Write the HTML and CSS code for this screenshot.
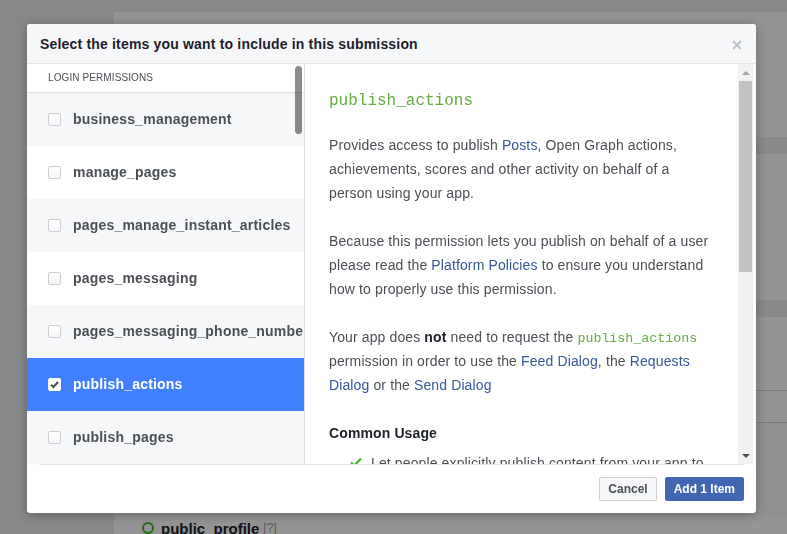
FILE: index.html
```html
<!DOCTYPE html>
<html lang="en">
<head>
<meta charset="utf-8">
<title>Select items</title>
<link rel="stylesheet" href="styles.css">
</head>
<body>
<div class="page">
  <div class="card">
    <div class="sec sec-a"></div>
    <div class="band"></div>
    <div class="sec sec-b"></div>
    <div class="band"></div>
    <div class="sec sec-c"></div>
    <div class="sec sec-d"></div>
    <div class="sec sec-e"></div>
    <div class="perm-row"><span class="ring"></span><span class="perm-name">public_profile</span><span class="perm-help">[?]</span></div>
  </div>
</div>
<div class="overlay"></div>
<div class="modal">
  <div class="modal-header">
    <h2 class="modal-title">Select the items you want to include in this submission</h2>
    <span class="close"><svg width="10" height="10" viewBox="0 0 10 10"><path d="M1 1L9 9M9 1L1 9" stroke="#bec2c9" stroke-width="2" fill="none"/></svg></span>
  </div>
  <div class="modal-body">
    <div class="list-pane">
      <div class="list-head">Login Permissions</div>
      <ul class="perm-list">
        <li class="item alt"><span class="cb"></span><span class="item-name">business_management</span></li>
        <li class="item"><span class="cb"></span><span class="item-name">manage_pages</span></li>
        <li class="item alt"><span class="cb"></span><span class="item-name">pages_manage_instant_articles</span></li>
        <li class="item"><span class="cb"></span><span class="item-name">pages_messaging</span></li>
        <li class="item alt"><span class="cb"></span><span class="item-name">pages_messaging_phone_number</span></li>
        <li class="item selected"><span class="cb checked"><svg width="11" height="11" viewBox="0 0 11 11"><path d="M2 5.8L4.4 8L9 3" stroke="#4b4f56" stroke-width="2" fill="none"/></svg></span><span class="item-name">publish_actions</span></li>
        <li class="item alt"><span class="cb"></span><span class="item-name">publish_pages</span></li>
      </ul>
      <div class="overlay-thumb"></div>
    </div>
    <div class="detail-pane">
      <div class="detail-content">
        <h3 class="perm-title">publish_actions</h3>
        <p class="para">Provides access to publish <a class="link">Posts</a>, Open Graph actions, achievements, scores and other activity on behalf of a person using your app.</p>
        <p class="para">Because this permission lets you publish on behalf of a user please read the <a class="link">Platform Policies</a> to ensure you understand how to properly use this permission.</p>
        <p class="para">Your app does <b class="strong">not</b> need to request the <code class="code">publish_actions</code> permission in order to use the <a class="link">Feed Dialog</a>, the <a class="link">Requests Dialog</a> or the <a class="link">Send Dialog</a></p>
        <h4 class="usage-title">Common Usage</h4>
        <ul class="usage-list">
          <li class="usage-item"><svg class="tick" width="12" height="10" viewBox="0 0 12 10"><path d="M1 5.5L4.3 8.5L11 1.5" stroke="#42b72a" stroke-width="2.2" fill="none"/></svg><span>Let people explicitly publish content from your app to Facebook.</span></li>
        </ul>
      </div>
      <div class="vscroll">
        <span class="arr up"></span>
        <span class="vthumb"></span>
        <span class="vfill"></span>
        <span class="arr down"></span>
      </div>
    </div>
  </div>
  <div class="modal-footer">
    <button class="btn">Cancel</button>
    <button class="btn primary">Add 1 Item</button>
  </div>
</div>
</body>
</html>
```

FILE: styles.css
```css
html, body {
  margin: 0;
  padding: 0;
}
body {
  width: 787px;
  height: 534px;
  overflow: hidden;
  background: #e9ebee;
  font-family: "Liberation Sans", Arial, Helvetica, sans-serif;
  color: #4b4f56;
}

/* background page */
.page {
  padding: 12px 0 0 114px;
}
.card {
  background: #fff;
  height: 522px;
}
.sec-a { height: 125px; }
.band { height: 17px; background: #eceef1; }
.sec-b { height: 146px; }
.sec-c { height: 73px; border-bottom: 1px solid #d3d6db; }
.sec-d { height: 31px; border-bottom: 1px solid #d3d6db; }
.sec-e { height: 91px; background: #f8f9fa; }
.perm-row {
  display: flex;
  align-items: center;
  padding-left: 28px;
  height: 28px;
}
.ring {
  width: 8px;
  height: 8px;
  border: 2px solid #42b72a;
  border-radius: 50%;
  margin-right: 7px;
}
.perm-name {
  font-weight: bold;
  font-size: 15px;
  color: #1d2129;
}
.perm-help {
  font-size: 12px;
  color: #9a9a9a;
  margin-left: 4px;
}

.overlay {
  position: fixed;
  inset: 0;
  background: rgba(0, 0, 0, 0.42);
}

/* modal */
.modal {
  position: fixed;
  left: 27px;
  top: 24px;
  width: 729px;
  height: 489px;
  background: #fff;
  border-radius: 3px;
  box-shadow: 0 2px 12px rgba(0, 0, 0, 0.3);
  display: flex;
  flex-direction: column;
  overflow: hidden;
}
.modal-header {
  height: 39px;
  flex: none;
  background: #f6f7f9;
  border-bottom: 1px solid #e5e5e5;
  display: flex;
  align-items: center;
  justify-content: space-between;
  padding: 0 14px 0 13px;
  border-radius: 3px 3px 0 0;
}
.modal-title {
  margin: 0;
  font-size: 14px;
  font-weight: bold;
  color: #1d2129;
  line-height: 18px;
  letter-spacing: 0.18px;
}
.close {
  display: flex;
  margin-top: 2px;
}

.modal-body {
  height: 400px;
  flex: none;
  display: flex;
}
.list-pane {
  position: relative;
  width: 277px;
  flex: none;
  border-right: 1px solid #dddfe2;
  overflow: hidden;
}
.list-head {
  height: 28px;
  line-height: 27px;
  border-bottom: 1px solid #dddfe2;
  padding-left: 21px;
  font-size: 10px;
  text-transform: uppercase;
  color: #4b4f56;
  letter-spacing: 0.1px;
}
.perm-list {
  list-style: none;
  margin: 0;
  padding: 0;
}
.item {
  height: 53px;
  display: flex;
  align-items: center;
  padding-left: 21px;
  white-space: nowrap;
  background: #fff;
}
.item.alt {
  background: #f6f7f9;
}
.item.selected {
  background: #4080ff;
}
.cb {
  width: 11px;
  height: 11px;
  flex: none;
  border: 1px solid #ccd0d5;
  border-radius: 2px;
  background: linear-gradient(#fff, #f5f6f7);
  margin-right: 12px;
  display: flex;
  align-items: center;
  justify-content: center;
}
.cb.checked {
  background: #fff;
  border-color: #fff;
}
.item-name {
  font-size: 14px;
  font-weight: bold;
  color: #4b4f56;
  letter-spacing: 0.2px;
  margin-top: -1px;
}
.item.selected .item-name {
  color: #fff;
}
.overlay-thumb {
  position: absolute;
  left: 268px;
  top: 2px;
  width: 7px;
  height: 68px;
  border-radius: 4px;
  background: rgba(0, 0, 0, 0.45);
}

.detail-pane {
  flex: 1;
  display: flex;
  padding-right: 3px;
  min-width: 0;
}
.detail-content {
  flex: 1;
  min-width: 0;
  overflow: hidden;
  padding: 23px 24px 0 24px;
  font-size: 14px;
  line-height: 24px;
  letter-spacing: 0.12px;
  color: #4b4f56;
}
.perm-title {
  margin: 0 0 18px;
  font-family: "Liberation Mono", "Courier New", monospace;
  font-weight: normal;
  font-size: 16px;
  line-height: 28px;
  letter-spacing: 0;
  color: #66ab43;
}
.para {
  margin: 0 0 24px;
}
.link {
  color: #365899;
  text-decoration: none;
}
.strong {
  color: #1d2129;
}
.code {
  font-family: "Liberation Mono", "Courier New", monospace;
  font-size: 13.3px;
  line-height: 1;
  letter-spacing: 0;
  color: #66ab43;
}
.usage-title {
  margin: 0 0 6px;
  font-size: 14px;
  font-weight: bold;
  line-height: 24px;
  color: #1d2129;
}
.usage-list {
  list-style: none;
  margin: 0;
  padding: 0 0 0 21px;
}
.usage-item {
  display: flex;
  align-items: flex-start;
  gap: 9px;
}
.tick {
  flex: none;
  margin-top: 6px;
}

.vscroll {
  width: 15px;
  flex: none;
  background: #f1f1f1;
  display: flex;
  flex-direction: column;
}
.arr {
  height: 17px;
  flex: none;
  display: flex;
  align-items: center;
  justify-content: center;
}
.arr::before {
  content: "";
  width: 0;
  height: 0;
  border-left: 4px solid transparent;
  border-right: 4px solid transparent;
}
.arr.up::before {
  border-bottom: 4px solid #a3a3a3;
}
.arr.down::before {
  border-top: 4px solid #505050;
}
.vthumb {
  height: 191px;
  flex: none;
  margin: 0 1px;
  background: #c1c1c1;
}
.vfill {
  flex: 1;
}

.modal-footer {
  height: 48px;
  flex: none;
  margin: 0 12px;
  border-top: 1px solid #e5e5e5;
  display: flex;
  align-items: center;
  justify-content: flex-end;
  gap: 8px;
}
.btn {
  height: 24px;
  padding: 0 8px;
  border: 1px solid #ced0d4;
  border-radius: 2px;
  background: #f6f7f9;
  color: #4b4f56;
  font-family: "Liberation Sans", Arial, Helvetica, sans-serif;
  font-size: 12px;
  font-weight: bold;
  line-height: 22px;
  cursor: pointer;
}
.btn.primary {
  background: #4267b2;
  border-color: #4267b2;
  color: #fff;
}
```
